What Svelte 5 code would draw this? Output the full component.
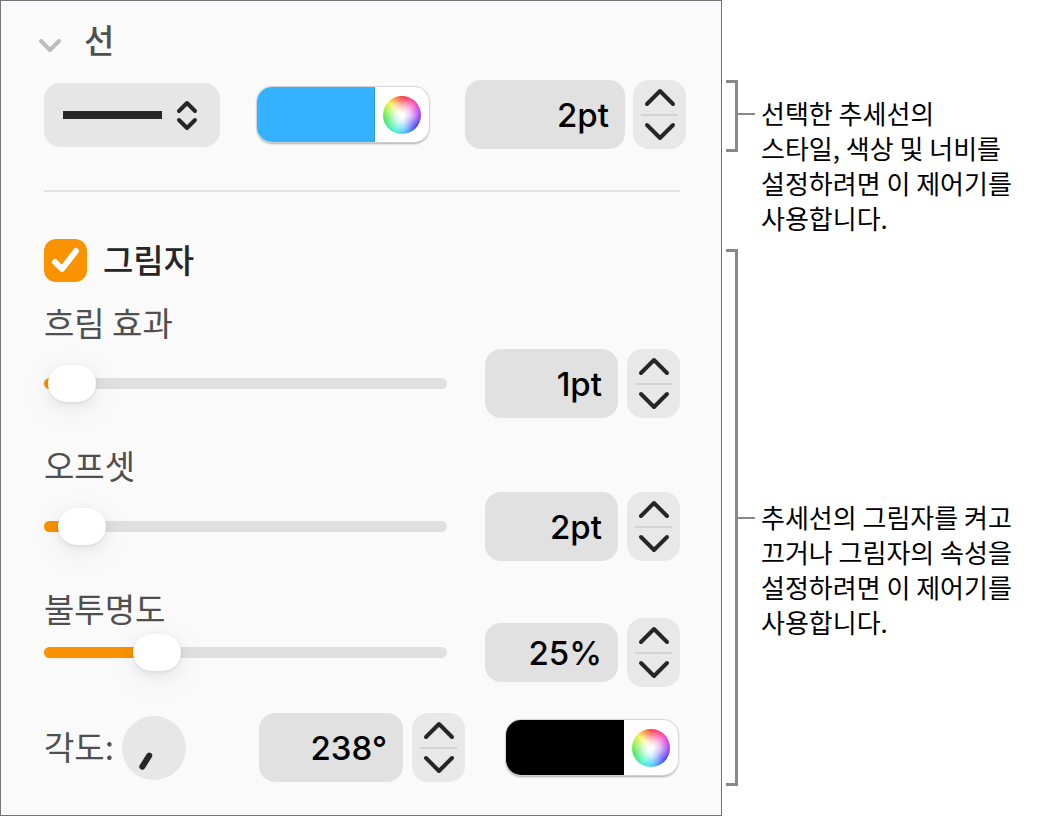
<script lang="ts">
  let open = $state(true)
  let lineStyle = $state('solid')
  let lineColor = $state('#34b2ff')
  let lineWidth = $state(2)

  let shadowOn = $state(true)
  let shadowColor = $state('#000000')
  let angle = $state(238)

  let sliders = $state([
    { id: 'blur',    label: '흐림 효과', value: 1,  max: 100, unit: 'pt', tight: false },
    { id: 'offset',  label: '오프셋',    value: 2,  max: 50,  unit: 'pt', tight: false },
    { id: 'opacity', label: '불투명도',  value: 25, max: 100, unit: '%',  tight: true },
  ])

  const clamp = (n: number, min: number, max: number) => Math.min(max, Math.max(min, n))

  function parse(e: Event, fallback: number) {
    const n = parseFloat((e.currentTarget as HTMLInputElement).value)
    return Number.isNaN(n) ? fallback : n
  }
</script>

{#snippet stepper(label: string, step: (d: number) => void)}
  <div class="stepper">
    <button type="button" aria-label={`${label} +`} onclick={() => step(1)}>
      <svg width="32" height="20" viewBox="0 0 32 20"><path d="M3 17 L16 4 L29 17" /></svg>
    </button>
    <hr />
    <button type="button" aria-label={`${label} -`} onclick={() => step(-1)}>
      <svg width="32" height="20" viewBox="0 0 32 20"><path d="M3 3 L16 16 L29 3" /></svg>
    </button>
  </div>
{/snippet}

<main class="page">
  <section class="panel">
    <h2>
      <button class="disclosure" type="button" aria-expanded={open} onclick={() => (open = !open)}>
        <svg width="22" height="14" viewBox="0 0 22 14"><path d="M3 3 L12 12 L21 3" /></svg>
        선
      </button>
    </h2>

    <div class="row stroke">
      <div class="popup">
        <select aria-label="선 스타일" bind:value={lineStyle}>
          <option value="solid" aria-label="실선"></option>
          <option value="dash" aria-label="파선"></option>
        </select>
        <svg class="popup-art" viewBox="0 0 176 64">
          <path class="sample" d="M19 32 H118" />
          <path class="arrows" d="M135 28 L143 20 L151 28 M135 37 L143 45 L151 37" />
        </svg>
      </div>

      <div class="well">
        <input type="color" aria-label="선 색상" bind:value={lineColor} />
        <button type="button" aria-label="색상 휠"><span class="wheel"></span></button>
      </div>

      <div class="number">
        <input
          class="field wide"
          type="text"
          aria-label="선 너비"
          value={`${lineWidth}pt`}
          onchange={(e) => (lineWidth = parse(e, lineWidth))}
        />
        {@render stepper('선 너비', (d) => (lineWidth = clamp(lineWidth + d, 0, 100)))}
      </div>
    </div>

    <div class="shadow">
      <label class="toggle">
        <input type="checkbox" bind:checked={shadowOn} />
        <svg class="tick" viewBox="0 0 43 43"><path d="M11 23 L18 30 L32 12" /></svg>
        <span>그림자</span>
      </label>

      {#each sliders as s (s.id)}
        <div class="setting" class:tight={s.tight}>
          <div class="track">
            <label for={s.id}>{s.label}</label>
            <input
              id={s.id}
              type="range"
              min="0"
              max={s.max}
              bind:value={s.value}
              style={`--p: ${s.value / s.max}`}
            />
          </div>
          <div class="number">
            <input
              class="field"
              class:short={s.tight}
              type="text"
              aria-label={s.label}
              value={`${s.value}${s.unit}`}
              onchange={(e) => (s.value = clamp(parse(e, s.value), 0, s.max))}
            />
            {@render stepper(s.label, (d) => (s.value = clamp(s.value + d, 0, s.max)))}
          </div>
        </div>
      {/each}

      <div class="row angle">
        <div class="dial-group">
          <label for="angle">각도:</label>
          <button class="dial" type="button" aria-label="각도 다이얼" onclick={() => (angle = (angle + 15) % 360)}>
            <svg viewBox="-32 -32 64 64">
              <path d="M9 0 H22" transform={`rotate(${-angle})`} />
            </svg>
          </button>
        </div>
        <div class="number">
          <input
            id="angle"
            class="field medium"
            type="text"
            value={`${angle}°`}
            onchange={(e) => (angle = parse(e, angle))}
          />
          {@render stepper('각도', (d) => (angle = (angle + d + 360) % 360))}
        </div>
        <div class="well">
          <input type="color" aria-label="그림자 색상" bind:value={shadowColor} />
          <button type="button" aria-label="색상 휠"><span class="wheel"></span></button>
        </div>
      </div>
    </div>
  </section>

  <aside class="notes">
    <div class="note">
      <span class="bracket"></span>
      <div class="callout">
        <span class="leader"></span>
        <p>선택한 추세선의<br />스타일, 색상 및 너비를<br />설정하려면 이 제어기를<br />사용합니다.</p>
      </div>
    </div>
    <div class="note fill">
      <span class="bracket"></span>
      <div class="callout">
        <span class="leader"></span>
        <p>추세선의 그림자를 켜고<br />끄거나 그림자의 속성을<br />설정하려면 이 제어기를<br />사용합니다.</p>
      </div>
    </div>
  </aside>
</main>

<style>
  :global(body) { background: #fff; }

  .page {
    display: grid;
    grid-template-columns: minmax(0, 1fr) 325px;
    font-family: "Noto Sans CJK KR", sans-serif;
    color: #000;
  }

  button, input, select { font: inherit; color: inherit; margin: 0; box-sizing: border-box; }
  button { border: 0; padding: 0; background: none; cursor: pointer; }
  svg { display: block; fill: none; stroke: #262626; stroke-width: 4; stroke-linecap: round; stroke-linejoin: round; }
  label { color: #4f4f4f; font-size: 33px; line-height: 36px; }

  .panel {
    box-sizing: border-box;
    min-width: 0;
    padding: 14px 35px 33px 37px;
    border: 1px solid #75737a;
    background: #fafafa;
  }

  h2 { margin: 0 0 17px; font-size: 33px; line-height: 48px; font-weight: 500; color: #505050; }
  .disclosure { display: flex; align-items: center; gap: 24px; }
  .disclosure svg { overflow: visible; margin-top: 12px; stroke: #bcbcbc; }

  .row { display: flex; align-items: center; }
  .stroke { justify-content: space-between; margin-left: 6px; }

  .popup { position: relative; width: 176px; height: 64px; }
  .popup select {
    appearance: none;
    width: 100%;
    height: 100%;
    border: 0;
    border-radius: 16px;
    background: #e6e6e6;
  }
  .popup-art { position: absolute; inset: 0; pointer-events: none; }
  .popup-art .sample { stroke-width: 8; stroke-linecap: butt; }

  .well {
    display: flex;
    flex: none;
    width: 172px;
    height: 55px;
    border-radius: 15px;
    background: #fff;
    box-shadow: 0 0 1px 1px #d4d4d4, 0 2px 2px #00000052;
    overflow: hidden;
  }
  .well input {
    appearance: none;
    width: 118px;
    height: 100%;
    padding: 0;
    border: 0;
    background: none;
  }
  .well input::-webkit-color-swatch-wrapper { padding: 0; }
  .well input::-webkit-color-swatch { border: 0; border-right: 1px solid #0000001f; border-radius: 0; }
  .well button { display: grid; flex: 1; place-items: center; }
  .wheel {
    width: 38px;
    height: 38px;
    border-radius: 50%;
    background:
      radial-gradient(circle, #fff 8%, #ffffffb3 32%, #ffffff00 70%),
      conic-gradient(#ff3838, #f83fc0 50deg, #b040f0 85deg, #4340f0 130deg, #48c8ff 175deg, #40f0d0 205deg, #40e858 255deg, #80f040 280deg, #f8f040 315deg, #ff3838);
  }

  .number { display: flex; align-items: center; gap: 9px; }
  .stroke .number { gap: 8px; }
  .field {
    width: 133px;
    height: 69px;
    padding: 0 16px;
    border: 0;
    border-radius: 16px;
    background: #e1e1e1;
    font-family: Inter, "Noto Sans CJK KR", sans-serif;
    font-size: 33px;
    font-weight: 500;
    text-align: right;
  }
  .field.wide { width: 160px; }
  .field.medium { width: 144px; }
  .field.short { height: 59px; }

  .stepper {
    display: flex;
    flex-direction: column;
    align-items: center;
    width: 53px;
    height: 69px;
    border-radius: 16px;
    background: #e8e8e8;
  }
  .stepper button { display: grid; flex: 1; width: 100%; place-items: center; }
  .stepper hr { width: 37px; height: 2px; margin: 0; border: 0; background: #d2d2d2; }

  .shadow {
    margin: 41px 6px 0;
    padding-top: 47px;
    border-top: 2px solid #e4e4e4;
  }

  .toggle { position: relative; display: flex; align-items: center; gap: 16px; margin-bottom: 22px; }
  .toggle input { appearance: none; width: 43px; height: 43px; border-radius: 12px; background: #e1e1e1; }
  .toggle input:checked { background: #fb9300; }
  .tick { position: absolute; left: 0; top: 0; width: 43px; height: 43px; stroke: #fff; stroke-width: 6; pointer-events: none; }
  .toggle input:not(:checked) + .tick { display: none; }
  .toggle span { font-weight: 500; color: #262626; }
  .toggle span, .dial-group label { padding-bottom: 4px; }

  .setting { display: flex; align-items: flex-end; gap: 38px; min-height: 114px; margin-bottom: 29px; }
  .setting.tight { min-height: 97px; margin-bottom: 26px; }
  .track {
    display: flex;
    flex: 1;
    flex-direction: column;
    align-self: stretch;
    justify-content: space-between;
    min-width: 0;
    padding-bottom: 16px;
  }

  input[type='range'] { appearance: none; width: 100%; height: 37px; background: none; }
  input[type='range']::-webkit-slider-runnable-track {
    height: 11px;
    border-radius: 6px;
    background: linear-gradient(to right, #f89200 calc(24px + (100% - 48px) * var(--p)), #e0e0e0 0);
  }
  input[type='range']::-webkit-slider-thumb {
    appearance: none;
    width: 48px;
    height: 37px;
    margin-top: -13px;
    border-radius: 19px;
    background: #fff;
    box-shadow: 0 1px 3px #00000014, 0 4px 14px #00000012, 0 8px 40px #0000000f;
  }

  .angle { gap: 41px; padding-right: 2px; }
  .dial-group { display: flex; flex: 1; align-items: center; gap: 8px; }
  .dial { width: 64px; height: 64px; border-radius: 50%; background: #e7e7e7; }
  .dial path { stroke-width: 6; }

  .notes { display: flex; flex-direction: column; gap: 97px; padding: 80px 0 30px 4px; }
  .note { display: flex; align-items: flex-start; height: 72px; }
  .note.fill { flex: 1; align-items: center; }
  .bracket { box-sizing: border-box; align-self: stretch; width: 12px; border: solid #888; border-width: 3px 3px 3px 0; }
  .callout { display: flex; align-items: center; height: 68px; }
  .leader { width: 17px; height: 2px; background: #888; }
  /* one line tall, so that the leader meets the first line of text */
  .note p { height: 38px; margin: 0 0 0 6px; font-size: 26px; line-height: 35px; white-space: nowrap; }
</style>
